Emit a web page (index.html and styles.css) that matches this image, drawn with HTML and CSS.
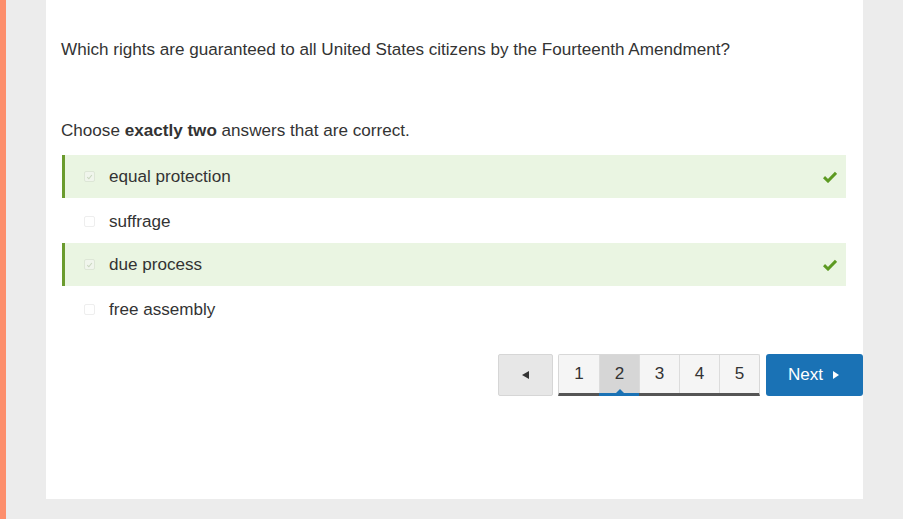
FILE: index.html
```html
<!DOCTYPE html>
<html>
<head>
<meta charset="utf-8">
<link rel="stylesheet" href="styles.css">
</head>
<body>
<div class="page">
  <div class="strip"></div>
  <div class="card">
    <p class="question">Which rights are guaranteed to all United States citizens by the Fourteenth Amendment?</p>
    <p class="instr">Choose <b>exactly two</b> answers that are correct.</p>
    <ul class="options">
      <li class="opt correct">
        <span class="box checked"><svg viewBox="0 0 10 10" width="10" height="10"><path d="M2.5 5.2 L4.3 7 L7.6 2.8" fill="none" stroke="#c9d6bf" stroke-width="1.2"/></svg></span>
        <span class="label">equal protection</span>
        <svg class="tick" viewBox="0 0 14 12" width="14" height="12"><path d="M1 6.2 L5 10 L13 1.8" fill="none" stroke="#5d9a22" stroke-width="3"/></svg>
      </li>
      <li class="opt">
        <span class="box"></span>
        <span class="label">suffrage</span>
      </li>
      <li class="opt correct">
        <span class="box checked"><svg viewBox="0 0 10 10" width="10" height="10"><path d="M2.5 5.2 L4.3 7 L7.6 2.8" fill="none" stroke="#c9d6bf" stroke-width="1.2"/></svg></span>
        <span class="label">due process</span>
        <svg class="tick" viewBox="0 0 14 12" width="14" height="12"><path d="M1 6.2 L5 10 L13 1.8" fill="none" stroke="#5d9a22" stroke-width="3"/></svg>
      </li>
      <li class="opt">
        <span class="box"></span>
        <span class="label">free assembly</span>
      </li>
    </ul>
    <div class="pager">
      <button class="prev"><span class="tri-left"></span></button>
      <div class="pages">
        <span class="pg">1</span>
        <span class="pg active">2</span>
        <span class="pg">3</span>
        <span class="pg">4</span>
        <span class="pg">5</span>
      </div>
      <button class="next">Next <span class="tri-right"></span></button>
    </div>
  </div>
</div>
</body>
</html>
```
FILE: styles.css
```css
* { box-sizing: border-box; }
html, body { margin: 0; padding: 0; }
body {
  background: #ececec;
  font-family: "Liberation Sans", Arial, sans-serif;
  color: #333;
  height: 519px;
  overflow: hidden;
}
.page {
  display: flex;
  height: 519px;
  align-items: flex-start;
}
.strip {
  width: 6px;
  height: 519px;
  background: #fd8e6c;
  flex: none;
}
.card {
  margin-left: 40px;
  width: 817px;
  height: 499px;
  background: #fff;
  padding: 38px 17px 0 15px;
}
.question {
  margin: 0;
  font-size: 17.1px;
  line-height: 24px;
}
.instr {
  margin: 57px 0 0;
  font-size: 17.1px;
  line-height: 24px;
}
.instr b { font-weight: bold; }
.options {
  list-style: none;
  margin: 12px 0 0 1px;
  padding: 0;
}
.opt {
  display: flex;
  align-items: center;
  height: 44px;
  border-left: 3px solid transparent;
  padding-left: 19px;
  padding-right: 9px;
  font-size: 17.1px;
}
.opt.correct {
  background: #eaf5e2;
  border-left-color: #6b9b2e;
  height: 43px;
  margin-bottom: 1px;
}
.box {
  width: 11px;
  height: 11px;
  border: 1px solid #eeeeee;
  border-radius: 2px;
  background: #fff;
  flex: none;
  display: flex;
  align-items: center;
  justify-content: center;
}
.box.checked {
  background: #f0f5ec;
  border-color: #dde6d6;
}
.box svg { display: block; }
.label {
  margin-left: 14px;
  padding-top: 1px;
  flex: 1;
}
.tick { flex: none; display: block; }
.pager {
  display: flex;
  justify-content: flex-end;
  margin-top: 23px;
  margin-right: -17px;
}
.prev {
  width: 55px;
  height: 42px;
  margin-right: 5px;
  background: #e7e7e7;
  border: 1px solid #d6d6d6;
  border-radius: 2px;
  padding: 0;
  display: flex;
  align-items: center;
  justify-content: center;
}
.tri-left {
  width: 0; height: 0;
  border-top: 4px solid transparent;
  border-bottom: 4px solid transparent;
  border-right: 7px solid #333;
}
.pages {
  display: flex;
  height: 42px;
  margin-right: 6px;
  border: 1px solid #d8d8d8;
  border-bottom: 3px solid #555;
  border-radius: 2px 2px 0 0;
  background: #f5f5f5;
}
.pg {
  width: 40px;
  display: flex;
  align-items: center;
  justify-content: center;
  font-size: 17.1px;
  color: #333;
  border-left: 1px solid #dcdcdc;
  position: relative;
}
.pg:first-child { border-left: none; }
.pg.active {
  background: #d6d6d6;
}
.pg.active::after {
  content: "";
  position: absolute;
  left: -1px; right: 0; bottom: -3px;
  height: 3px;
  background: #1a72b5;
}
.pg.active::before {
  content: "";
  position: absolute;
  left: 50%;
  bottom: 0;
  margin-left: -4px;
  border-left: 4px solid transparent;
  border-right: 4px solid transparent;
  border-bottom: 4px solid #1a72b5;
}
.next {
  width: 97px;
  height: 42px;
  background: #1a72b5;
  color: #fff;
  border: none;
  border-radius: 3px;
  font-family: "Liberation Sans", Arial, sans-serif;
  font-size: 17.1px;
  padding: 0 2px 0 0;
  display: flex;
  align-items: center;
  justify-content: center;
  gap: 10px;
}
.tri-right {
  width: 0; height: 0;
  border-top: 4px solid transparent;
  border-bottom: 4px solid transparent;
  border-left: 6px solid #fff;
}
```
